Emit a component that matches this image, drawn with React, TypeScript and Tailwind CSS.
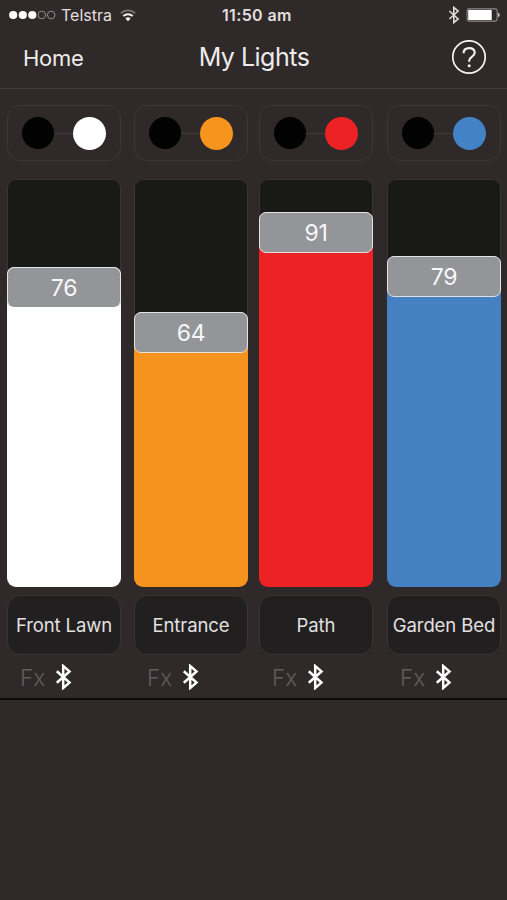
type Light = {
  name: string;
  level: number;
  offset: string;
  dot: string;
  fill: string;
  top: string;
  knob: string;
};

const lights: Light[] = [
  { name: "Front Lawn", level: 76, offset: "ml-[7px]", dot: "bg-white", fill: "bg-white", top: "pt-[88px]", knob: "border-[#e4e4e5] border-b-white" },
  { name: "Entrance", level: 64, offset: "ml-[13px]", dot: "bg-[#f7941e]", fill: "bg-[#f5931e]", top: "pt-[133px]", knob: "border-[#e4e2e1]" },
  { name: "Path", level: 91, offset: "ml-[11px]", dot: "bg-[#ed2225]", fill: "bg-[#ec2224]", top: "pt-[33px]", knob: "border-[#e4e2e1]" },
  { name: "Garden Bed", level: 79, offset: "ml-[14px]", dot: "bg-[#4382c4]", fill: "bg-[#4581c2]", top: "pt-[77px]", knob: "border-[#e4e2e1]" },
];

function Bluetooth({ className, weight }: { className: string; weight: number }) {
  return (
    <svg className={className} viewBox="0 0 16 26" fill="none" stroke="currentColor" strokeWidth={weight} strokeLinejoin="miter">
      <path d="M1.3 7.2 14 18.6 7.7 24V2L14 7.4 1.3 18.8" />
    </svg>
  );
}

function StatusBar() {
  return (
    <div className="flex h-[30px] items-center pl-[9px] pr-[7px] text-[#e2dfde]">
      <div className="flex w-[213px] items-center">
        <svg className="h-[10px] w-[48px]" viewBox="0 0 48 10">
          <g fill="#fff">
            <circle cx="4.2" cy="5" r="4.1" />
            <circle cx="13.8" cy="5" r="4.1" />
            <circle cx="23.3" cy="5" r="4.1" />
          </g>
          <g fill="none" stroke="#938e8d" strokeWidth="1">
            <circle cx="32.8" cy="5" r="3.8" />
            <circle cx="42.2" cy="5" r="3.8" />
          </g>
        </svg>
        <span className="ml-[4px] w-[52px] whitespace-nowrap text-[16px] leading-[20px]">Telstra</span>
        <svg className="ml-[7px] h-[13px] w-[16px]" viewBox="0 0 16 13" fill="none">
          <path d="M.8 4.3a10.4 10.4 0 0 1 14.4 0" stroke="#777271" strokeWidth="1.8" />
          <path d="M3.3 7.1a6.8 6.8 0 0 1 9.4 0" stroke="#f2f0ef" strokeWidth="2" />
          <path d="m8 12.3-2.6-2.8a3.8 3.8 0 0 1 5.2 0Z" fill="#fff" />
        </svg>
      </div>
      <span className="w-[72px] whitespace-nowrap text-[16px] font-semibold leading-[20px] tracking-[0.35px]">11:50 am</span>
      <div className="ml-auto flex items-center gap-[6px]">
        <Bluetooth className="h-[18px] w-[12px] text-[#dedbda]" weight={2.3} />
        <svg className="h-[14px] w-[34px]" viewBox="0 0 34 14">
          <rect x="1.1" y=".9" width="30" height="12.2" rx="1.8" fill="none" stroke="#8f8b8a" strokeWidth="1.1" />
          <rect x="2.2" y="2" width="23.5" height="10" fill="#fff" />
          <path d="M32 4.8c2.3.7 2.3 3.7 0 4.4Z" fill="#c8c5c4" />
        </svg>
      </div>
    </div>
  );
}

function Channel({ light }: { light: Light }) {
  return (
    <div className={"flex w-[114px] shrink-0 flex-col " + light.offset}>
      <div className="flex h-[56px] shrink-0 items-center justify-center rounded-[13px] border border-[#3c3736] pr-px">
        <span className="size-[32px] rounded-full bg-[#020203]" />
        <span className="h-px w-[19px] bg-[#413c3b]" />
        <span className={"size-[33px] rounded-full " + light.dot} />
      </div>
      <div className={"mt-[18px] flex h-[408px] shrink-0 flex-col overflow-hidden rounded-[9px] bg-[#191918] shadow-[inset_0_0_0_1px_#3b3534] " + light.top}>
        <div className={"flex h-full flex-col rounded-t-[8px] " + light.fill}>
          <div className={"flex h-[41px] shrink-0 items-center justify-center rounded-[7px] border-[1.5px] bg-[#939598] pt-[2px] text-[23px] tracking-[-0.2px] text-[#f7f7f7] " + light.knob}>
            {light.level}
          </div>
        </div>
      </div>
      <div className="mt-[8px] flex h-[60px] shrink-0 items-center justify-center whitespace-nowrap rounded-[13px] border border-[#393534] bg-[#221f20] pt-[2px] text-[18.5px] tracking-[-0.1px] text-[#e3e1e0]">
        {light.name}
      </div>
      <div className="flex h-[43px] shrink-0 items-center pl-[13px] pt-px">
        <span className="w-[35px] pt-[2px] text-[22.5px] font-light text-[#625c5b]">Fx</span>
        <Bluetooth className="h-[26px] w-[17px] text-white" weight={2.5} />
      </div>
    </div>
  );
}

export default function App() {
  return (
    <main className="flex h-[900px] w-[507px] flex-col overflow-hidden bg-[#2f2929] font-['Inter',sans-serif]">
      <StatusBar />
      <header className="grid h-[59px] grid-cols-[1fr_120px_1fr] items-center border-b border-[#403b3a] pb-[4px] pl-[23px] pr-[21px] text-[#eeeceb]">
        <span className="pt-[2px] text-[22px] tracking-[-0.3px]">Home</span>
        <h1 className="whitespace-nowrap pt-[2px] pr-px text-center text-[25px] tracking-[-0.5px]">My Lights</h1>
        <svg className="size-[35px] justify-self-end" viewBox="0 0 35 35" fill="none" stroke="#f5f3f2">
          <circle cx="18" cy="17" r="16.2" strokeWidth="1.7" />
          <path d="M12.6 13.3c0-3.2 2.2-5.2 5.5-5.2 3.4 0 5.6 1.9 5.6 4.7 0 4-5.5 4.1-5.5 7.7v1.2" strokeWidth="2.1" />
          <circle cx="18.2" cy="25.8" r="1.5" fill="#f5f3f2" stroke="none" />
        </svg>
      </header>
      <section className="flex h-[611px] border-b-2 border-[#0d0a0a] pt-[16px]">
        {lights.map((light) => (
          <Channel key={light.name} light={light} />
        ))}
      </section>
    </main>
  );
}
